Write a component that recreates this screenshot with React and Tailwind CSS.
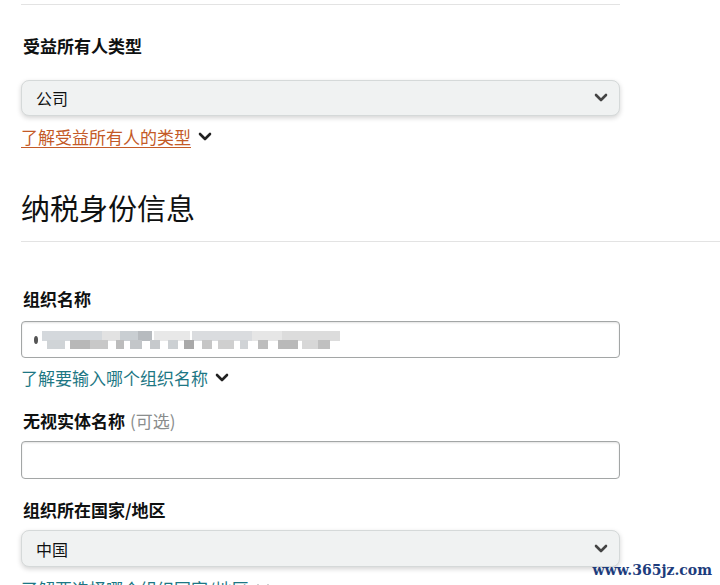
import React from 'react';

const font = { fontFamily: '"Noto Sans CJK SC", "Noto Sans", sans-serif' };

function Chevron({ className = '' }) {
  return (
    <svg viewBox="0 0 14 10" className={className} fill="none">
      <polyline points="2,2 7,7 12,2" stroke="currentColor" strokeWidth="2.6" strokeLinecap="round" strokeLinejoin="round" />
    </svg>
  );
}

function SelectBox({ value, className = '' }) {
  return (
    <div className={`flex items-center justify-between w-[599px] bg-[#f0f2f2] border border-[#d5d9d9] rounded-[8px] shadow-[0_2px_5px_rgba(15,17,17,0.18)] pl-[14px] pr-[11px] ${className}`}>
      <span className="text-[16px] text-[#0f1111]">{value}</span>
      <Chevron className="w-[14px] h-[10px] text-[#444]" />
    </div>
  );
}

function HelpLink({ children, color, underline, className = '' }) {
  return (
    <div className={`flex items-center h-[24px] ${className}`}>
      <span className={`text-[17px] leading-[24px] ${color} ${underline ? 'underline underline-offset-[3px]' : ''}`}>{children}</span>
      <Chevron className="w-[14px] h-[10px] ml-[7px] text-[#222]" />
    </div>
  );
}

// blurred organisation name
const blocks = [
  [10, 0, 60, 10, '#d4d8dc'], [70, 0, 20, 10, '#e2e2e2'], [88, 0, 18, 10, '#c9ced2'],
  [106, 0, 14, 10, '#b7bbbf'], [122, 0, 36, 10, '#e8e8e8'], [160, 0, 60, 10, '#dadcdf'],
  [220, 0, 30, 10, '#e6e6e6'], [250, 0, 58, 10, '#dcdcdc'],
  [15, 9, 18, 9, '#d0d4d7'], [38, 9, 20, 9, '#b8b8b8'], [58, 9, 18, 9, '#c8c8c8'],
  [84, 9, 8, 9, '#bcbcbc'], [98, 9, 12, 9, '#c3c6c9'], [118, 9, 10, 9, '#c6c9cc'],
  [136, 9, 10, 9, '#ccd0d3'], [152, 9, 10, 9, '#a9a9a9'], [170, 9, 10, 9, '#c6c6c6'],
  [186, 9, 16, 9, '#cfcfcf'], [208, 9, 8, 9, '#d0d3d6'], [226, 9, 10, 9, '#bdbdbd'],
  [246, 9, 20, 9, '#b9b9b9'], [270, 9, 16, 9, '#d7d7d7'], [286, 9, 12, 9, '#c0c0c0'],
];

export default function App() {
  return (
    <div className="relative w-[720px] h-[585px] overflow-hidden bg-white text-[#0f1111]" style={font}>
      <div className="pt-[4px] pl-[21px]">
        <div className="w-[599px] h-px bg-[#e3e3e3]" />

        <div className="mt-[29px] pl-[2px] text-[17px] leading-[24px] font-bold">受益所有人类型</div>
        <SelectBox value="公司" className="mt-[22px] h-[36px]" />
        <HelpLink color="text-[#c45a27] decoration-[#c45a27]" underline className="mt-[9px]">了解受益所有人的类型</HelpLink>

        <div className="mt-[38px] text-[29px] leading-[40px] font-normal">纳税身份信息</div>
        <div className="mt-[14px] h-px bg-[#e3e3e3]" />

        <div className="mt-[45px] pl-[2px] text-[17px] leading-[24px] font-bold">组织名称</div>
        <div className="mt-[10px] w-[599px] h-[37px] border border-[#a3a6a6] rounded-[4px] flex items-center pl-[10px] shadow-[inset_0_1px_2px_rgba(15,17,17,0.12)]">
          <svg width="312" height="18" viewBox="0 0 312 18">
            <ellipse cx="4" cy="9" rx="2" ry="4" fill="#555" />
            {blocks.map(([x, y, w, h, c], i) => (
              <rect key={i} x={x} y={y} width={w} height={h} fill={c} />
            ))}
          </svg>
        </div>
        <HelpLink color="text-[#1d7784]" className="mt-[8px]">了解要输入哪个组织名称</HelpLink>

        <div className="mt-[19px] pl-[2px] text-[17px] leading-[24px]">
          <span className="font-bold">无视实体名称</span>
          <span className="ml-[5px] text-[#8a8d8d]">(可选)</span>
        </div>
        <div className="mt-[8px] w-[599px] h-[38px] border border-[#a3a6a6] rounded-[4px] shadow-[inset_0_1px_2px_rgba(15,17,17,0.12)]" />

        <div className="mt-[19px] pl-[2px] text-[17px] leading-[24px] font-bold">组织所在国家/地区</div>
        <SelectBox value="中国" className="mt-[8px] h-[37px]" />
        <HelpLink color="text-[#1d7784]" className="mt-[10px]">了解要选择哪个组织国家/地区</HelpLink>
      </div>

      <div className="absolute right-[8px] bottom-[6px] text-[14px] leading-[18px] font-bold text-[#1d3c7c]" style={{ fontFamily: '"DejaVu Serif", serif' }}>
        www.365jz.com
      </div>
    </div>
  );
}
